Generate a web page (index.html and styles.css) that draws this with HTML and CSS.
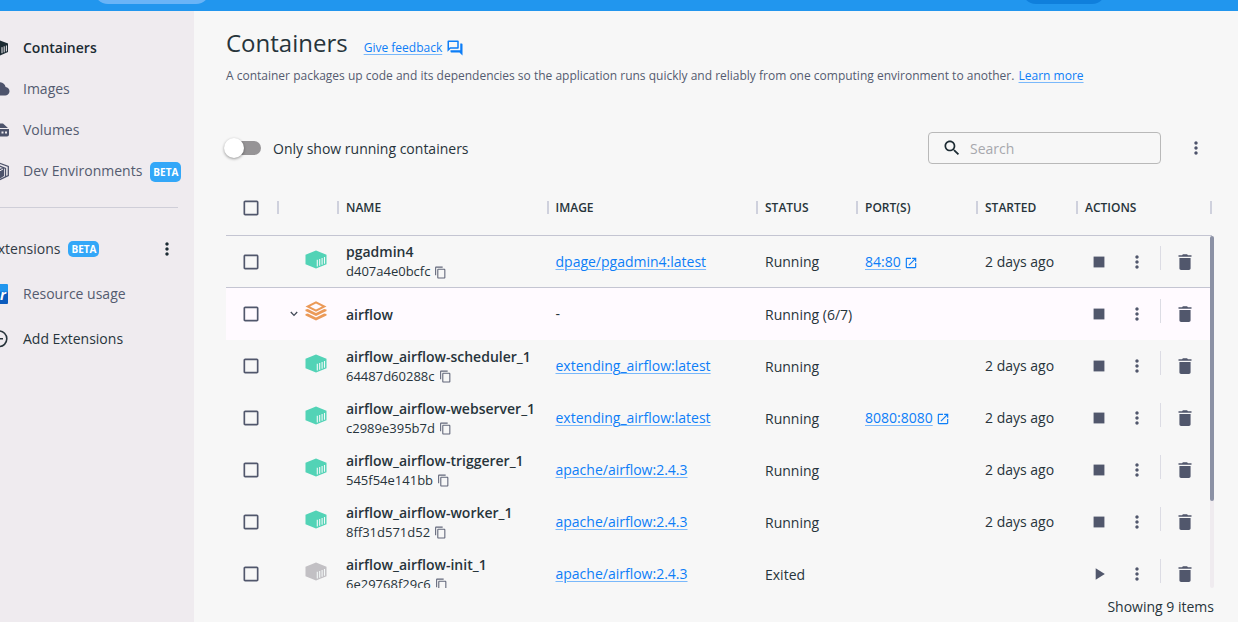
FILE: index.html
```html
<!DOCTYPE html>
<html lang="en">
<head>
<meta charset="utf-8">
<title>Containers</title>
<link rel="stylesheet" href="styles.css">
</head>
<body>
<svg class="sprite" aria-hidden="true">
  <symbol id="cube" viewBox="0 0 22 18"><path fill="currentColor" d="M11 0 21.500 4.200V13.800L11 18 .5 13.800V4.200Z"/><path class="slats" d="M12.300 9.300V16M14.700 8.500V15.200M17.100 7.600V14.300M19.500 6.400V13.200"/></symbol>
  <symbol id="stack" viewBox="0 0 22 20"><path fill="currentColor" fill-rule="evenodd" d="M11 .3 21.500 5.500 11 10.700.5 5.500ZM11 2.600 5 5.500 11 8.500 17 5.500Z"/><path fill="currentColor" d="M.5 8.600 2.900 8.100 11 12.100 19.100 8.100 21.500 8.600V9.900L11 15 .5 9.900ZM.5 13 2.900 12.600 11 16.600 19.100 12.600 21.500 13V14.400L11 19.500.5 14.400Z"/></symbol>
  <symbol id="more" viewBox="0 0 24 24"><path fill="currentColor" d="M12 8c1.100 0 2-.9 2-2s-.9-2-2-2-2 .9-2 2 .9 2 2 2zm0 2c-1.100 0-2 .9-2 2s.9 2 2 2 2-.9 2-2-.9-2-2-2zm0 6c-1.100 0-2 .9-2 2s.9 2 2 2 2-.9 2-2-.9-2-2-2z"/></symbol>
  <symbol id="trash" viewBox="0 0 24 24"><path fill="currentColor" d="M5.300 19.500c0 1.100.9 2 2 2h9.400c1.100 0 2-.9 2-2V7.200H5.300v12.300zM19.800 3.800h-4.300l-1-1h-5l-1 1H4.200v2h15.600z"/></symbol>
  <symbol id="copy" viewBox="0 0 24 24"><path fill="currentColor" d="M16 1H4c-1.100 0-2 .9-2 2v14h2V3h12V1zm3 4H8c-1.100 0-2 .9-2 2v14c0 1.100.9 2 2 2h11c1.100 0 2-.9 2-2V7c0-1.100-.9-2-2-2zm0 16H8V7h11v14z"/></symbol>
  <symbol id="launch" viewBox="0 0 24 24"><path fill="currentColor" d="M19 19H5V5h7V3H5c-1.110 0-2 .9-2 2v14c0 1.100.89 2 2 2h14c1.100 0 2-.9 2-2v-7h-2v7zM14 3v2h3.590l-9.830 9.830 1.410 1.410L19 6.410V10h2V3h-7z"/></symbol>
  <symbol id="box" viewBox="0 0 24 24"><path fill="currentColor" d="M19 5v14H5V5h14m0-2H5c-1.100 0-2 .9-2 2v14c0 1.100.9 2 2 2h14c1.100 0 2-.9 2-2V5c0-1.100-.9-2-2-2z"/></symbol>
  <symbol id="stop" viewBox="0 0 24 24"><path fill="currentColor" d="M5.500 5.500h13v13h-13z"/></symbol>
  <symbol id="play" viewBox="0 0 24 24"><path fill="currentColor" d="M8 5v14l11-7z"/></symbol>
</svg>

<header class="topbar"><span class="top-search"></span><span class="top-user"></span></header>

<div class="app">
  <nav class="sidebar">
    <a class="nav-item active"><svg class="nav-icon" viewBox="0 0 20 20"><path fill="currentColor" d="M9 2 18 5.500V14L9 18 0 14V5.500Z"/><path class="nav-slats" d="M12 9.200V15.200M14.200 8.300V14.300M16.400 7.500V13.400"/></svg>Containers</a>
    <a class="nav-item"><svg class="nav-icon" viewBox="0 0 20 20"><path fill="currentColor" d="M15.600 8A6.300 6.300 0 0 0 4 6.500 5 5 0 0 0 4.500 16.500H14.800A4.250 4.250 0 0 0 15.600 8Z"/></svg>Images</a>
    <a class="nav-item"><svg class="nav-icon" viewBox="0 0 20 20"><path fill="currentColor" d="M5 3.500H13L18 8H0ZM0 9H19V14.500Q19 16.500 17 16.500H2Q0 16.500 0 14.500Z"/><path fill="#efebef" d="M11.500 11.500h2v2h-2zM15 11.500h2v2h-2z"/></svg>Volumes</a>
    <a class="nav-item"><svg class="nav-icon" viewBox="0 0 20 20"><path fill="none" stroke="currentColor" stroke-width="1.300" d="M9 2 18.300 5.500V14.500L9 19M7 4 15.500 7.500V16"/><path fill="currentColor" d="M1 6 8 8.500 14 6.500V15L9 18 1 15Z"/><path stroke="#efebef" fill="none" d="M8 11 13 8"/></svg>Dev Environments<span class="beta">BETA</span></a>
    <hr class="rule">
    <div class="ext-head"><span>Extensions</span><span class="beta">BETA</span><svg class="ext-more"><use href="#more"/></svg></div>
    <a class="nav-item tall"><span class="resource-icon">r</span>Resource usage</a>
    <a class="nav-item tall dark"><svg class="nav-icon" viewBox="0 0 20 20"><path fill="none" stroke="currentColor" stroke-width="1.600" d="M9 2a7.800 7.800 0 1 1 0 15.600A7.800 7.800 0 0 1 9 2ZM5 9.800H13M9 5.800V13.800"/></svg>Add Extensions</a>
  </nav>

  <main class="main">
    <div class="title-row"><h1>Containers</h1><a class="link feedback">Give feedback</a><svg class="forum" viewBox="0 0 24 24"><path fill="currentColor" d="M15 4v7H5.170L4 12.170V4h11m1-2H3c-.55 0-1 .45-1 1v14l4-4h10c.55 0 1-.45 1-1V3c0-.55-.45-1-1-1zm5 4h-2v9H6v2c0 .55.45 1 1 1h11l4 4V7c0-.55-.45-1-1-1z"/></svg></div>
    <p class="intro">A container packages up code and its dependencies so the application runs quickly and reliably from one computing environment to another. <a class="link learn">Learn more</a></p>

    <div class="toolbar">
      <span class="switch"><span class="knob"></span></span>
      <span class="switch-label">Only show running containers</span>
      <div class="search"><svg viewBox="0 0 24 24"><path fill="currentColor" d="M15.500 14h-.79l-.28-.27C15.410 12.590 16 11.110 16 9.500 16 5.910 13.090 3 9.500 3S3 5.910 3 9.500 5.910 16 9.500 16c1.610 0 3.090-.59 4.230-1.570l.27.28v.79l5 4.990L20.490 19l-4.990-5zm-6 0C7.010 14 5 11.990 5 9.500S7.010 5 9.500 5 14 7.010 14 9.500 11.990 14 9.500 14z"/></svg><span>Search</span></div>
      <svg class="tool-more"><use href="#more"/></svg>
    </div>

    <div class="grid-row head">
      <div class="cell check"><svg><use href="#box"/></svg></div><div class="cell"></div><div class="cell">NAME</div><div class="cell">IMAGE</div><div class="cell">STATUS</div><div class="cell">PORT(S)</div><div class="cell">STARTED</div><div class="cell">ACTIONS</div>
    </div>

    <div class="table-body">
      <div class="rows">
        <div class="grid-row lined">
          <div class="check"><svg><use href="#box"/></svg></div>
          <div class="kind"><svg class="cube"><use href="#cube"/></svg></div>
          <div class="name"><b>pgadmin4</b><span>d407a4e0bcfc<svg><use href="#copy"/></svg></span></div>
          <div class="cell"><a class="link">dpage/pgadmin4:latest</a></div><div class="cell">Running</div>
          <div class="cell"><a class="link">84:80</a><svg class="launch"><use href="#launch"/></svg></div><div class="cell">2 days ago</div>
          <div class="actions"><svg class="state"><use href="#stop"/></svg><svg class="dots"><use href="#more"/></svg><i></i><svg class="bin"><use href="#trash"/></svg></div>
        </div>
        <div class="grid-row group">
          <div class="check"><svg><use href="#box"/></svg></div>
          <div class="kind"><svg class="chevron" viewBox="0 0 8 6"><path d="M.8 1 4 4.400 7.200 1"/></svg><svg class="stack"><use href="#stack"/></svg></div>
          <div class="name"><b>airflow</b></div>
          <div class="cell dash">-</div><div class="cell">Running (6/7)</div><div class="cell"></div><div class="cell"></div>
          <div class="actions"><svg class="state"><use href="#stop"/></svg><svg class="dots"><use href="#more"/></svg><i></i><svg class="bin"><use href="#trash"/></svg></div>
        </div>
        <div class="grid-row">
          <div class="check"><svg><use href="#box"/></svg></div>
          <div class="kind"><svg class="cube"><use href="#cube"/></svg></div>
          <div class="name"><b>airflow_airflow-scheduler_1</b><span>64487d60288c<svg><use href="#copy"/></svg></span></div>
          <div class="cell"><a class="link">extending_airflow:latest</a></div><div class="cell status">Running</div><div class="cell"></div><div class="cell">2 days ago</div>
          <div class="actions"><svg class="state"><use href="#stop"/></svg><svg class="dots"><use href="#more"/></svg><i></i><svg class="bin"><use href="#trash"/></svg></div>
        </div>
        <div class="grid-row">
          <div class="check"><svg><use href="#box"/></svg></div>
          <div class="kind"><svg class="cube"><use href="#cube"/></svg></div>
          <div class="name"><b>airflow_airflow-webserver_1</b><span>c2989e395b7d<svg><use href="#copy"/></svg></span></div>
          <div class="cell"><a class="link">extending_airflow:latest</a></div><div class="cell status">Running</div>
          <div class="cell"><a class="link">8080:8080</a><svg class="launch"><use href="#launch"/></svg></div><div class="cell">2 days ago</div>
          <div class="actions"><svg class="state"><use href="#stop"/></svg><svg class="dots"><use href="#more"/></svg><i></i><svg class="bin"><use href="#trash"/></svg></div>
        </div>
        <div class="grid-row">
          <div class="check"><svg><use href="#box"/></svg></div>
          <div class="kind"><svg class="cube"><use href="#cube"/></svg></div>
          <div class="name"><b>airflow_airflow-triggerer_1</b><span>545f54e141bb<svg><use href="#copy"/></svg></span></div>
          <div class="cell"><a class="link">apache/airflow:2.4.3</a></div><div class="cell status">Running</div><div class="cell"></div><div class="cell">2 days ago</div>
          <div class="actions"><svg class="state"><use href="#stop"/></svg><svg class="dots"><use href="#more"/></svg><i></i><svg class="bin"><use href="#trash"/></svg></div>
        </div>
        <div class="grid-row">
          <div class="check"><svg><use href="#box"/></svg></div>
          <div class="kind"><svg class="cube"><use href="#cube"/></svg></div>
          <div class="name"><b>airflow_airflow-worker_1</b><span>8ff31d571d52<svg><use href="#copy"/></svg></span></div>
          <div class="cell"><a class="link">apache/airflow:2.4.3</a></div><div class="cell status">Running</div><div class="cell"></div><div class="cell">2 days ago</div>
          <div class="actions"><svg class="state"><use href="#stop"/></svg><svg class="dots"><use href="#more"/></svg><i></i><svg class="bin"><use href="#trash"/></svg></div>
        </div>
        <div class="grid-row">
          <div class="check"><svg><use href="#box"/></svg></div>
          <div class="kind"><svg class="cube exited"><use href="#cube"/></svg></div>
          <div class="name"><b>airflow_airflow-init_1</b><span>6e29768f29c6<svg><use href="#copy"/></svg></span></div>
          <div class="cell"><a class="link">apache/airflow:2.4.3</a></div><div class="cell status">Exited</div><div class="cell"></div><div class="cell"></div>
          <div class="actions"><svg class="state play"><use href="#play"/></svg><svg class="dots"><use href="#more"/></svg><i></i><svg class="bin"><use href="#trash"/></svg></div>
        </div>
      </div>
      <div class="scroll"><div class="thumb"></div></div>
    </div>
    <footer class="count">Showing 9 items</footer>
  </main>
</div>
</body>
</html>
```

FILE: styles.css
```css
* { box-sizing: border-box; }
body { margin: 0; width: 1238px; height: 622px; overflow: hidden; background: #f7f7f7; color: #27343b; font: 14px/20px "Open Sans", sans-serif; }
svg { display: block; flex: none; }
.sprite { position: absolute; width: 0; height: 0; }

.topbar { display: flex; height: 11px; padding-left: 94px; background: #2196ee; overflow: hidden; }
.top-search { width: 116px; height: 28px; margin-top: -24px; border-radius: 14px; background: #69b4f7; }
.top-user { width: 84px; height: 28px; margin: -24px 0 0 812px; border-radius: 14px; background: #0f7fdc; }
.app { display: flex; height: 611px; }

.sidebar { flex: none; width: 194px; padding-top: 16px; background: #efebef; overflow: hidden; color: #545b70; }
.nav-item { display: flex; align-items: center; height: 41px; }
.nav-icon { width: 20px; height: 20px; margin: 0 13px 0 -10px; color: #4d536b; }
.active { color: #1c2b33; font-weight: 600; }
.active .nav-icon { color: #1c2b33; }
.nav-slats { stroke: #efebef; stroke-width: 1; }
.beta { width: 31px; height: 20px; margin-left: 8px; border-radius: 5px; background: #33a7f8; color: #fff; font-size: 10px; font-weight: 700; line-height: 20px; text-align: center; }
.nav-item .beta { margin-top: 2px; }
.rule { width: 178px; height: 1px; margin: 16px 0 18px; border: 0; background: #cfced8; }
.ext-head { display: flex; align-items: center; height: 45px; color: #2f3a44; }
.ext-head > span:first-child { margin-left: -10px; }
.ext-head .beta { height: 16px; line-height: 16px; }
.ext-more { width: 20px; height: 20px; margin-left: 58px; color: #1c2b33; }
.tall { height: 45px; }
.dark, .dark .nav-icon { color: #27343b; }
.resource-icon { width: 20px; height: 20px; margin: 0 15px 0 -12px; padding-right: 2px; border-radius: 1px; background: linear-gradient(#2196ee 35%, #0b5bbd 45%); color: #fff; font: italic 700 14px/22px "Open Sans", sans-serif; text-align: right; }

.main { width: 988px; margin-left: 32px; }
.title-row { display: flex; align-items: center; height: 44px; padding-top: 20px; }
h1 { margin: 0 16px 0 0; font-size: 24px; line-height: 32px; font-weight: 400; }
.link { color: #0d7ef7; text-decoration: underline; text-decoration-color: #79b8fb; text-underline-offset: 2px; text-decoration-thickness: 1px; }
.feedback { margin-top: 10px; font-size: 12px; }
.forum { width: 18px; height: 18px; margin: 9px 0 0 4px; color: #0d7ef7; }
.intro { margin: 11px 0 0; font-size: 12px; line-height: 20px; color: #545b70; white-space: nowrap; }
.learn { margin-left: 1px; }

.toolbar { display: flex; align-items: center; height: 32px; margin-top: 46px; }
.switch { width: 34px; height: 14px; margin-left: 1px; border-radius: 7px; background: #969496; }
.knob { display: block; width: 20px; height: 20px; margin: -3px 0 0 -3px; border-radius: 50%; background: #fff; box-shadow: 0 1px 3px rgba(0,0,0,.4); }
.switch-label { margin-left: 12px; line-height: 20px; padding-top: 1px; }
.search { display: flex; align-items: center; width: 233px; height: 32px; margin-left: auto; padding-left: 13px; border: 1px solid #b9b9b9; border-radius: 4px; color: #a7a8ad; }
.search svg { width: 20px; height: 20px; margin-right: 8px; color: #1c2b33; }
.search span { padding-top: 1px; }
.tool-more { width: 20px; height: 20px; margin: 0 8.500px 0 24.500px; color: #4d536b; }

.grid-row { display: grid; grid-template-columns: 52px 60px 209.500px 209.500px 100px 120px 100px 134px; width: 985px; height: 52px; align-items: center; }
.head { height: 56px; margin-top: 16px; border-bottom: 1px solid #c4c5d2; width: 986px; font-size: 12px; font-weight: 600; }
.cell { display: flex; align-items: center; padding-left: 8px; height: 20px; white-space: nowrap; }
.head .cell { height: 13px; margin-right: -1px; border-right: 2px solid #cfd1dd; line-height: 13px; }
.check, .head .check { display: flex; padding-left: 15px; }
.check svg { width: 20px; height: 20px; color: #51576c; }

.table-body { display: flex; height: 352px; overflow: hidden; }
.rows { width: 984px; overflow: hidden; }
.lined { border-bottom: 1px solid #c4c5d2; }
.group { background: #fffaff; }
.kind { display: flex; align-items: center; justify-content: flex-end; padding: 0 11.500px 5px 0; }
.group .kind { padding-bottom: 6px; }
.cube { width: 22px; height: 19px; color: #52d3b6; }
.exited { color: #c2c0c4; }
.slats { fill: none; stroke: #f4f8f8; stroke-width: 1.100; }
.stack { width: 22px; height: 20px; color: #eb9a58; }
.chevron { width: 8px; height: 6px; margin: 6px 7px 0 0; fill: none; stroke: #424957; stroke-width: 1.300; }
.name { padding-left: 8px; }
.name b { display: block; font-weight: 600; line-height: 20px; }
.name span { display: flex; align-items: center; font-size: 13px; line-height: 19px; }
.name svg { width: 13px; height: 13px; margin: 1px 0 0 4px; color: #62677a; }
.launch { width: 14px; height: 14px; margin: 2px 0 0 3px; color: #0d7ef7; }
.group .cell, .group .name, .status { padding-top: 1px; }
.group .dash { padding-top: 0; }
.actions { display: flex; align-items: center; color: #51576c; }
.state { width: 20px; height: 20px; margin-left: 11.500px; }
.dots { width: 20px; height: 20px; margin-left: 18.500px; }
.actions i { width: 1px; height: 24px; margin: 0 13.500px 7px 13px; background: #dcdce4; }
.bin { width: 20px; height: 20px; }
.scroll { width: 4px; height: 352px; border-radius: 2px; background: #efebef; }
.thumb { height: 265px; border-radius: 2px; background: #8b91a5; }
.count { margin-top: 9px; text-align: right; }
```
